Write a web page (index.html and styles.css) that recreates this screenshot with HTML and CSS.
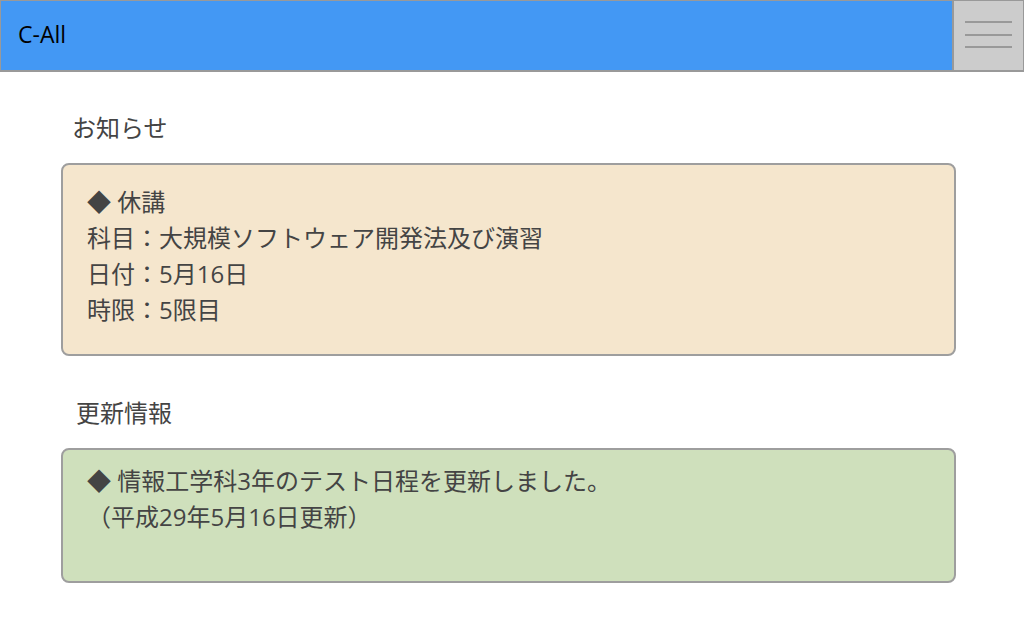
FILE: index.html
```html
<!DOCTYPE html>
<html lang="ja">
<head>
<meta charset="utf-8">
<title>C-All</title>
<link rel="stylesheet" href="styles.css">
</head>
<body>
<header class="header">
  <div class="title">C-All</div>
  <button class="menu" aria-label="menu">
    <span class="bar"></span>
    <span class="bar"></span>
    <span class="bar"></span>
  </button>
</header>
<main class="main">
  <h2 class="heading heading-news">お知らせ</h2>
  <section class="card card-news">
    <p class="line">◆ 休講</p>
    <p class="line">科目：大規模ソフトウェア開発法及び演習</p>
    <p class="line">日付：5月16日</p>
    <p class="line">時限：5限目</p>
  </section>
  <h2 class="heading heading-update">更新情報</h2>
  <section class="card card-update">
    <p class="line">◆ 情報工学科3年のテスト日程を更新しました。</p>
    <p class="line">（平成29年5月16日更新）</p>
  </section>
</main>
</body>
</html>
```
FILE: styles.css
```css
* { box-sizing: border-box; }
html, body { margin: 0; padding: 0; background: #fff; }
body {
  font-family: "Open Sans", "Noto Sans CJK JP", sans-serif;
  color: #444;
  font-size: 24px;
  width: 1024px;
  height: 640px;
  overflow: hidden;
}
.header {
  display: flex;
  height: 72px;
  background: #4398f4;
  border: 1px solid #999;
  border-bottom-width: 2px;
}
.title {
  flex: 1;
  display: flex;
  align-items: center;
  padding-left: 17px;
  padding-bottom: 3px;
  color: #000;
  font-size: 23px;
}
.menu {
  width: 71px;
  margin: 0;
  padding: 20px 0 0 11px;
  background: #ccc;
  border: none;
  border-left: 2px solid #999;
  display: flex;
  flex-direction: column;
  gap: 10.5px;
  align-items: flex-start;
}
.bar {
  display: block;
  width: 47px;
  height: 2px;
  background: #999;
}
.main {
  padding: 0 68px 0 61px;
}
.heading {
  margin: 0;
  font-weight: normal;
  font-size: 24px;
  line-height: 36px;
}
.heading-news { padding: 38px 0 0 11px; }
.heading-update { padding: 39px 0 0 15px; }
.card {
  margin-top: 17px;
  border: 2px solid #9e9e9e;
  border-radius: 8px;
  padding: 0 24px;
}
.card-news {
  background: #f5e6cd;
  padding-top: 19px;
  padding-bottom: 26px;
}
.card-update {
  background: #cfe0bc;
  padding-top: 13px;
  padding-bottom: 46px;
}
.line {
  margin: 0;
  font-size: 24px;
  line-height: 36px;
}
```
